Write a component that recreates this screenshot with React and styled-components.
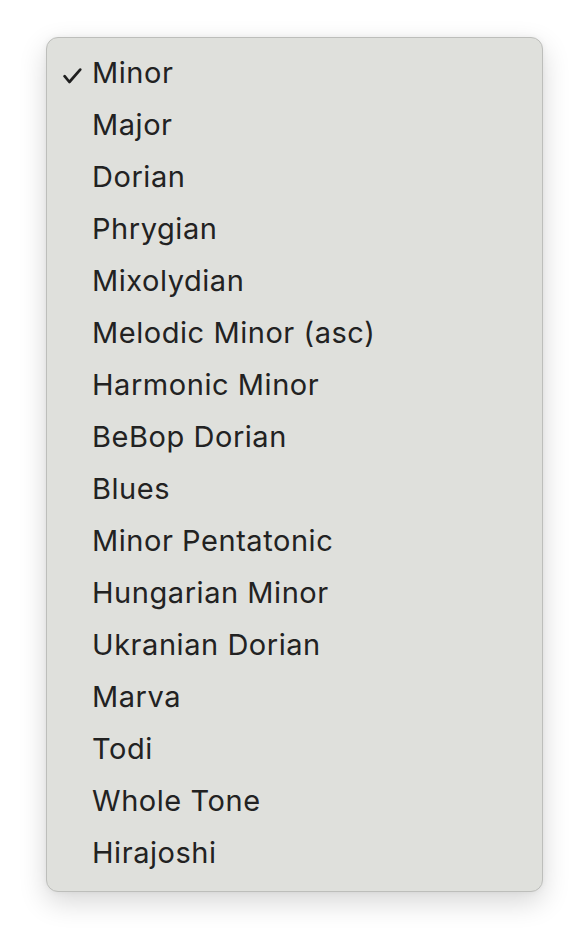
import { createGlobalStyle } from "styled-components";
import styled from "styled-components";

const GlobalStyle = createGlobalStyle`
  html, body {
    margin: 0;
    padding: 0;
    background: #ffffff;
  }
  body {
    font-family: Inter, "Liberation Sans", sans-serif;
    -webkit-font-smoothing: antialiased;
  }
`;

const Page = styled.div`
  width: 588px;
  height: 944px;
  box-sizing: border-box;
  padding: 37px 0 0 46px;
`;

const Menu = styled.ul`
  list-style: none;
  margin: 0;
  box-sizing: border-box;
  width: 497px;
  padding: 10px 0 11px;
  background: #dfe0dc;
  border: 1px solid #bdbebb;
  border-radius: 12px;
  box-shadow: 0 10px 28px rgba(0, 0, 0, 0.16), 0 0 6px rgba(0, 0, 0, 0.05);
`;

const Item = styled.li`
  display: grid;
  grid-template-columns: 45px 1fr;
  align-items: center;
  height: 52px;
  font-size: 29px;
  line-height: 1;
  color: #222222;
  letter-spacing: 0.55px;
`;

const Label = styled.span`
  margin-top: -4px;
`;

const Check = styled.span`
  display: flex;
  justify-content: flex-end;
  padding-right: 10px;
  padding-top: 4px;
  visibility: ${(p) => (p.$on ? "visible" : "hidden")};
`;

const scales = [
  "Minor",
  "Major",
  "Dorian",
  "Phrygian",
  "Mixolydian",
  "Melodic Minor (asc)",
  "Harmonic Minor",
  "BeBop Dorian",
  "Blues",
  "Minor Pentatonic",
  "Hungarian Minor",
  "Ukranian Dorian",
  "Marva",
  "Todi",
  "Whole Tone",
  "Hirajoshi",
];

function CheckMark() {
  return (
    <svg width="19" height="16" viewBox="0 0 19 16">
      <path
        d="M1.6 8.2 L6.4 14 L17.2 1.6"
        fill="none"
        stroke="#1f1f1f"
        strokeWidth="2.7"
        strokeLinecap="round"
        strokeLinejoin="round"
      />
    </svg>
  );
}

export default function App() {
  const selected = "Minor";
  return (
    <Page>
      <GlobalStyle />
      <Menu>
        {scales.map((name) => (
          <Item key={name}>
            <Check $on={name === selected}>
              <CheckMark />
            </Check>
            <Label>{name}</Label>
          </Item>
        ))}
      </Menu>
    </Page>
  );
}
